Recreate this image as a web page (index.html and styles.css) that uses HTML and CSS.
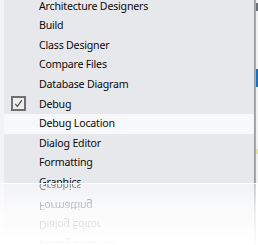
FILE: index.html
```html
<!DOCTYPE html>
<html>
<head>
<meta charset="utf-8">
<link rel="stylesheet" href="styles.css">
</head>
<body>
<div class="stage">
  <div class="top">
    <div class="gutter"></div>
    <div class="menu">
      <ul class="list">
        <li class="row">Architecture Designers</li>
        <li class="row">Build</li>
        <li class="row">Class Designer</li>
        <li class="row">Compare Files</li>
        <li class="row">Database Diagram</li>
        <li class="row"><span class="check"><svg width="9" height="9" viewBox="0 0 9 9"><path d="M1.2 4.8 L3.4 7.4 L7.8 1.2" fill="none" stroke="#5a5a5a" stroke-width="1.3"/></svg></span>Debug</li>
        <li class="row hot">Debug Location</li>
        <li class="row">Dialog Editor</li>
        <li class="row">Formatting</li>
        <li class="row">Graphics</li>
      </ul>
    </div>
    <div class="border"></div>
    <div class="beyond">
      <span class="b-dark"></span>
      <span class="b-blue"></span>
      <span class="b-yellow"></span>
    </div>
  </div>
  <div class="reflect">
    <div class="flip">
      <div class="gutter"></div>
      <div class="menu">
        <ul class="list">
          <li class="row">Architecture Designers</li>
          <li class="row">Build</li>
          <li class="row">Class Designer</li>
          <li class="row">Compare Files</li>
          <li class="row">Database Diagram</li>
          <li class="row">Debug</li>
          <li class="row hot">Debug Location</li>
          <li class="row">Dialog Editor</li>
          <li class="row">Formatting</li>
          <li class="row">Graphics</li>
        </ul>
      </div>
      <div class="border"></div>
    </div>
  </div>
</div>
</body>
</html>
```
FILE: styles.css
```css
* { box-sizing: border-box; }
html, body { margin: 0; padding: 0; background: #ffffff; }
.stage {
  width: 258px;
  height: 245px;
  overflow: hidden;
  font-family: "Noto Sans", "Open Sans", sans-serif;
  font-size: 10.6px;
  letter-spacing: -0.2px;
  color: #0a0a0a;
}
.top {
  display: flex;
  height: 184px;
  border-bottom: 1px solid #ffffff;
}
.gutter {
  width: 4px;
  flex: none;
  background: #f3f3f5;
}
.menu {
  width: 250px;
  flex: none;
  background: #e7e8ec;
  overflow: hidden;
}
.border {
  width: 2px;
  flex: none;
  background: linear-gradient(to right, #8e8e90, #b8b8ba);
}
.beyond {
  width: 2px;
  flex: none;
  background: #f0f0f0;
  display: flex;
  flex-direction: column;
}
.b-dark { display: block; height: 8px; margin-top: 3px; background: #6a6f78; }
.b-blue { display: block; height: 18px; margin-top: 58px; background: #1d6fb8; }
.b-yellow { display: block; height: 5px; margin-top: 62px; background: #e8e39a; }
.list {
  list-style: none;
  margin: -3.4px 0 0 0;
  padding: 0;
}
.row {
  height: 19.6px;
  line-height: 19.6px;
  padding-left: 35px;
  position: relative;
  white-space: nowrap;
}
.row.hot { background: #f7f8f9; }
.check {
  position: absolute;
  left: 7px;
  top: 1.4px;
  width: 15px;
  height: 15px;
  border: 2px solid #6f6f6f;
  background: #eeeef0;
  display: flex;
  align-items: center;
  justify-content: center;
}
.check svg { display: block; }
.reflect {
  height: 60px;
  overflow: hidden;
  -webkit-mask-image: linear-gradient(to bottom, rgba(0,0,0,0.55) 0%, rgba(0,0,0,0.2) 45%, rgba(0,0,0,0.03) 100%);
  mask-image: linear-gradient(to bottom, rgba(0,0,0,0.55) 0%, rgba(0,0,0,0.2) 45%, rgba(0,0,0,0.03) 100%);
}
.flip {
  display: flex;
  width: 256px;
  height: 184px;
  transform: scaleY(-1);
}
```
